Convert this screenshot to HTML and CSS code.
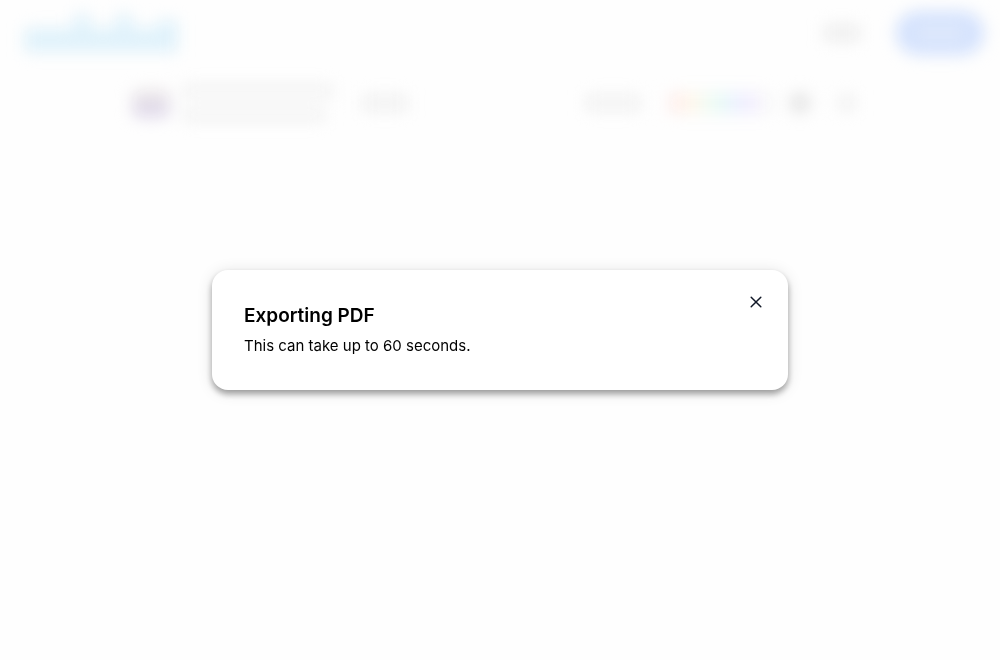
FILE: index.html
```
<!DOCTYPE html>
<html lang="en">
<head>
<meta charset="utf-8">
<meta name="viewport" content="width=device-width, initial-scale=1">
<title>Exporting PDF</title>
<link rel="stylesheet" href="styles.css">
</head>
<body>
<div class="page" aria-hidden="true" inert>
  <header class="topbar">
    <div class="brand"><span class="brand-start"></span><span class="brand-tall"></span><span class="brand-middle"></span><span class="brand-tall"></span><span class="brand-middle"></span><span class="brand-end"></span></div>
    <nav class="account">
      <button class="login" type="button"><span class="word word-login"></span></button>
      <button class="signup" type="button"><span class="word word-signup"></span></button>
    </nav>
  </header>
  <div class="toolbar">
    <div class="document">
      <span class="thumbnail"></span>
      <div class="title"><span class="line"></span><span class="line line-short"></span></div>
      <span class="word word-privacy"></span>
    </div>
    <div class="tools">
      <span class="word word-tool"></span>
      <div class="swatches">
        <span class="swatch red"></span><span class="swatch yellow"></span><span class="swatch green"></span><span class="swatch teal"></span><span class="swatch blue"></span><span class="swatch violet"></span><span class="swatch gray"></span>
      </div>
      <span class="dot"></span>
      <span class="word word-more"></span>
    </div>
  </div>
</div>
<div class="overlay">
  <section class="dialog" role="dialog" aria-modal="true" aria-labelledby="dialog-title" aria-describedby="dialog-text">
    <div>
      <h1 class="dialog-title" id="dialog-title">Exporting PDF</h1>
      <p class="dialog-text" id="dialog-text">This can take up to 60 seconds.</p>
    </div>
    <button class="close" type="button" aria-label="Close">
      <svg viewBox="0 0 16 16" width="16" height="16" fill="none" stroke="currentColor" stroke-width="1.5" stroke-linecap="round" aria-hidden="true"><path d="M3.2 3.2 12.8 12.8M12.8 3.2 3.2 12.8"/></svg>
    </button>
  </section>
</div>
</body>
</html>
```
FILE: styles.css
```
* {
  box-sizing: border-box;
}

body {
  margin: 0;
  min-height: 100vh;
  background: #fefefe;
  color: #000;
  font-family: Inter, "Liberation Sans", sans-serif;
}

button {
  padding: 0;
  border: 0;
  background: none;
  color: inherit;
  font: inherit;
}

.page {
  filter: blur(8px);
}

.topbar {
  display: flex;
  align-items: center;
  justify-content: space-between;
  height: 66px;
  padding: 0 16px 0 24px;
}

.brand {
  display: flex;
  align-items: flex-end;
}

.brand-start,
.brand-tall,
.brand-middle,
.brand-end {
  height: 24px;
  background: #e0f2fb;
}

.brand-start {
  width: 50px;
}

.brand-tall {
  width: 16px;
  height: 38px;
}

.brand-middle {
  width: 26px;
}

.brand-end {
  width: 20px;
  height: 32px;
}

.account {
  display: flex;
  align-items: center;
  gap: 36px;
}

.login,
.signup {
  display: flex;
  align-items: center;
  justify-content: center;
}

.login {
  height: 40px;
}

.signup {
  width: 88px;
  height: 44px;
  border-radius: 22px;
  background: #d4e2fd;
}

.word {
  height: 16px;
  background: #f2f2f2;
}

.word-login {
  width: 36px;
  background: #eee;
}

.word-signup {
  width: 48px;
  height: 12px;
  background: #e2ebfc;
}

.toolbar,
.document,
.tools {
  display: flex;
  align-items: center;
}

.toolbar {
  justify-content: space-between;
  height: 74px;
  padding: 0 144px 0 132px;
}

.thumbnail {
  width: 38px;
  height: 28px;
  margin-right: 12px;
  border-radius: 8px;
  background: linear-gradient(#efecea, #d9d1e8);
}

.title {
  display: grid;
  gap: 12px;
  margin-right: 28px;
}

.line {
  width: 152px;
  height: 12px;
  background: #f2f2f2;
}

.line-short {
  width: 144px;
}

.word-privacy {
  width: 46px;
  background: #f1f1f1;
}

.word-tool {
  width: 56px;
  margin-right: 28px;
}

.swatches {
  display: flex;
  margin-right: 16px;
}

.swatch {
  width: 15px;
  height: 20px;
}

.red {
  background: #feeeeb;
}

.yellow {
  background: #fef6ea;
}

.green {
  background: #f2fbf2;
}

.teal {
  background: #e6f9f6;
}

.blue {
  background: #ebefff;
}

.violet {
  background: #f2edfe;
}

.gray {
  background: #f8f8f8;
}

.dot {
  width: 20px;
  height: 20px;
  margin-right: 28px;
  border-radius: 50%;
  background: #e2e2e2;
}

.word-more {
  width: 18px;
}

.overlay {
  position: fixed;
  inset: 0;
  display: flex;
  align-items: center;
  justify-content: center;
  padding: 16px;
}

.dialog {
  display: flex;
  align-items: flex-start;
  justify-content: space-between;
  width: 100%;
  max-width: 576px;
  padding: 20px 20px 32px 32px;
  border-radius: 16px;
  background: #fff;
  box-shadow: 0 4px 6px rgba(0, 0, 0, 0.34), 0 2px 16px rgba(0, 0, 0, 0.12);
}

.dialog-title {
  margin: 12px 0 4px;
  font-size: 19px;
  font-weight: 600;
  line-height: 28px;
}

.dialog-text {
  margin: 0;
  font-size: 15px;
  line-height: 24px;
}

.close {
  display: flex;
  align-items: center;
  justify-content: center;
  width: 24px;
  height: 24px;
  color: #111827;
  cursor: pointer;
}
```
